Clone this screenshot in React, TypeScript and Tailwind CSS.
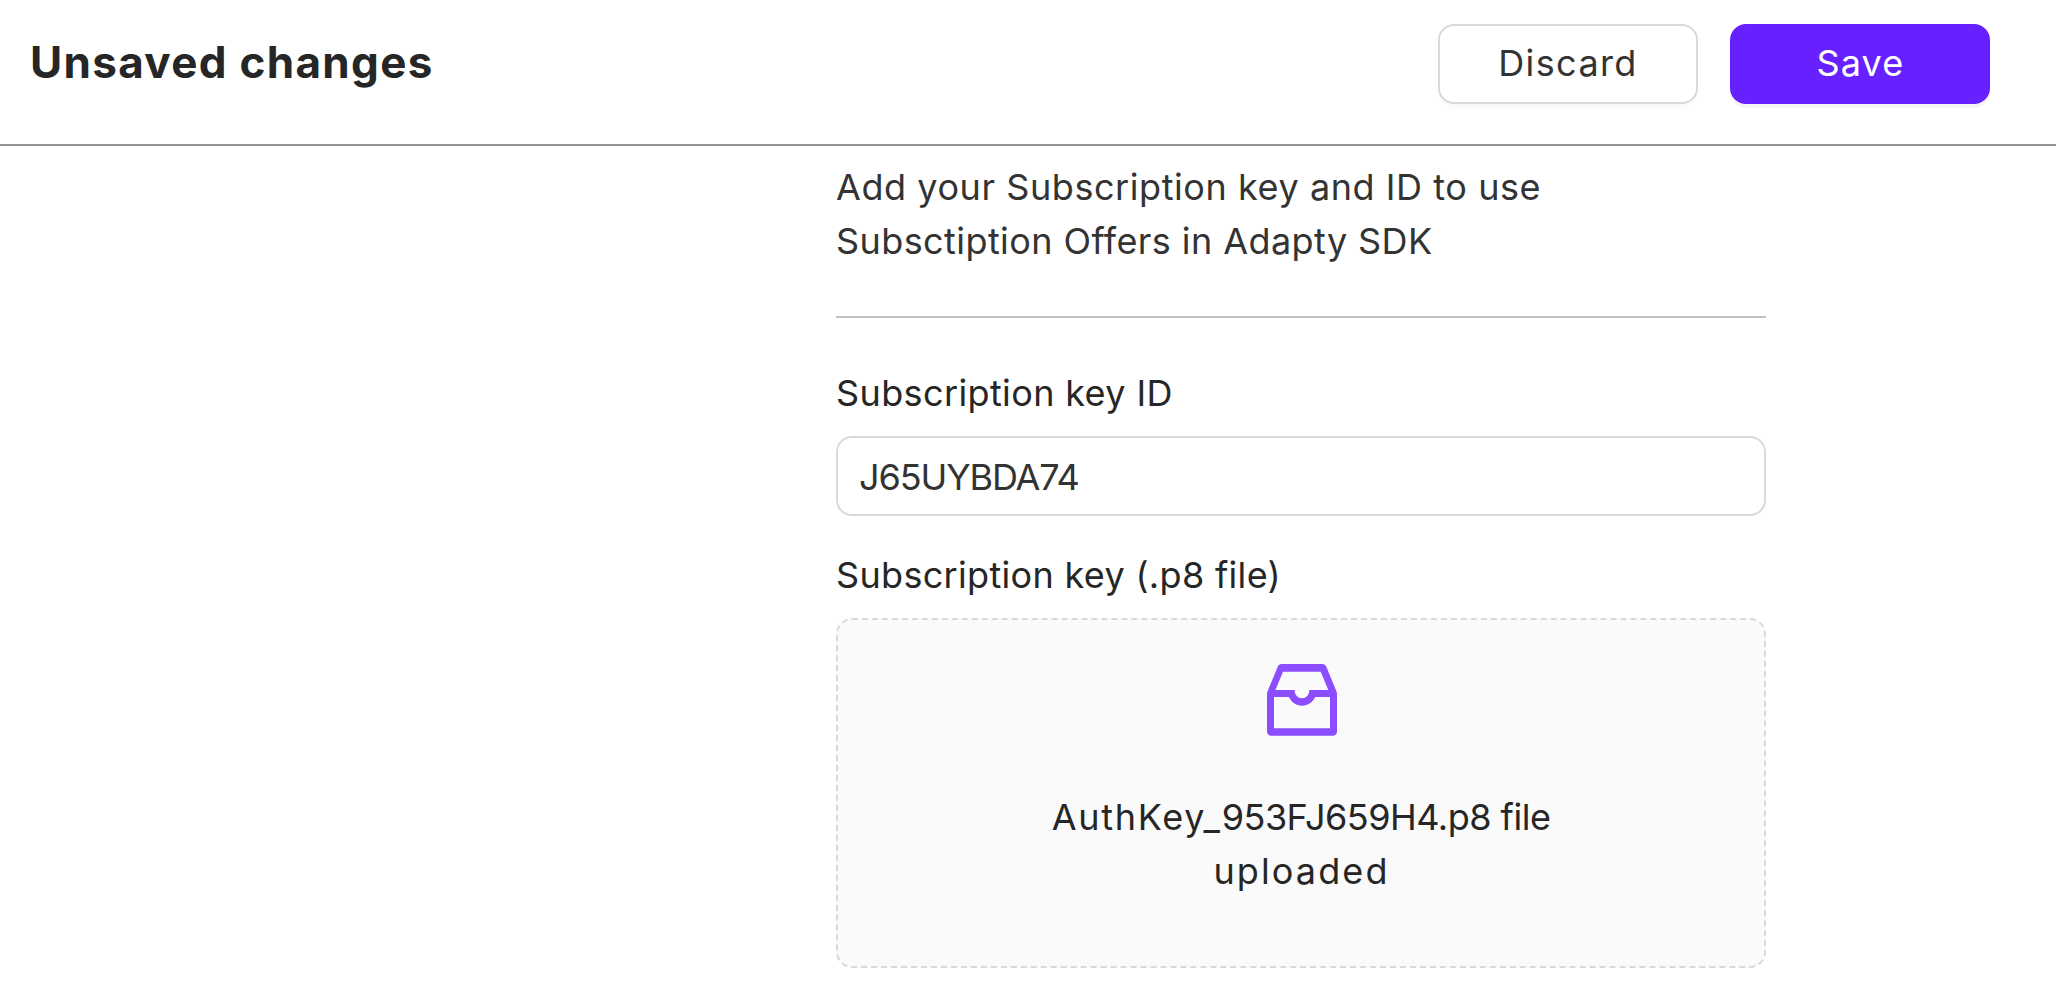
function InboxIcon() {
  return (
    <svg width="70" height="72" viewBox="0 0 70 72" fill="#8b4dff" fillRule="evenodd" aria-hidden="true">
      <path d="M14.6 0H55.4C57.2 0 58.6 1 59.3 2.700L69.500 27.600C69.800 28.400 70 29.200 70 30V67.700C70 69.900 68.200 71.700 66 71.700H4C1.800 71.700 0 69.900 0 67.700V30C0 29.200 .2 28.400 .5 27.600L10.700 2.700C11.400 1 12.800 0 14.600 0ZM16 7.700L8.400 26H27.700V27C27.700 31 31 34.200 35 34.200S42.200 31 42.200 27V26H61.300L53.700 7.700ZM7 33V64.200H63V33H48.200C46 38.200 40.900 41.700 35 41.700S24.200 38.200 22 33Z" />
    </svg>
  );
}

export default function App() {
  return (
    <div className="flex h-[998px] w-full flex-col overflow-hidden bg-white font-['Inter',sans-serif] text-[36px] leading-[54px] text-[#262626]">
      <header className="flex h-[146px] shrink-0 items-start justify-between border-b-2 border-[#959595] pt-6 pr-[66px] pl-[30px]">
        <h1 className="pt-[5px] text-[44px] leading-[66px] font-bold tracking-[1.32px]">Unsaved changes</h1>
        <div className="flex gap-8">
          <button className="flex h-20 w-[260px] justify-center rounded-[16px] border-2 border-[#d9d9d9] bg-white pt-[10px] tracking-[1.4px] text-[#333333] shadow-[0_4px_0_rgba(0,0,0,0.02)]">
            Discard
          </button>
          <button className="flex h-20 w-[260px] justify-center rounded-[16px] bg-[#6720ff] pt-[12px] pl-[1px] tracking-[1.2px] text-white shadow-[0_4px_0_rgba(0,0,0,0.045)]">
            Save
          </button>
        </div>
      </header>

      <main className="ml-[836px] flex w-[930px] flex-col pt-[14px]">
        <p className="whitespace-nowrap text-[#333333]">
          <span className="block tracking-[0.57px]">Add your Subscription key and ID to use</span>
          <span className="block tracking-[0.42px]">Subsctiption Offers in Adapty SDK</span>
        </p>
        <hr className="mt-12 border-t-2 border-[#c1c1c1]" />

        <label htmlFor="key-id" className="mt-12 tracking-[0.38px]">
          Subscription key ID
        </label>
        <input
          id="key-id"
          defaultValue="J65UYBDA74"
          className="mt-4 h-20 rounded-[16px] border-2 border-[#d9d9d9] bg-white px-[21px] pt-[2px] tracking-[-1.1px] text-[#333333] outline-none"
        />

        <p className="mt-8 tracking-[0.32px]">Subscription key (.p8 file)</p>
        <div className="mt-4 flex h-[350px] flex-col items-center rounded-[16px] border-2 border-dashed border-[#d9d9d9] bg-[#fafafa] pt-11 text-center">
          <div className="pl-[2px]">
            <InboxIcon />
          </div>
          <p className="mt-[54px]">
            <span className="block tracking-[-0.5px]">
              <span className="tracking-[1.75px]">AuthKey_</span>953FJ659H4.p8 file
            </span>
            <span className="block pl-px tracking-[2.1px]">uploaded</span>
          </p>
        </div>
      </main>
    </div>
  );
}
